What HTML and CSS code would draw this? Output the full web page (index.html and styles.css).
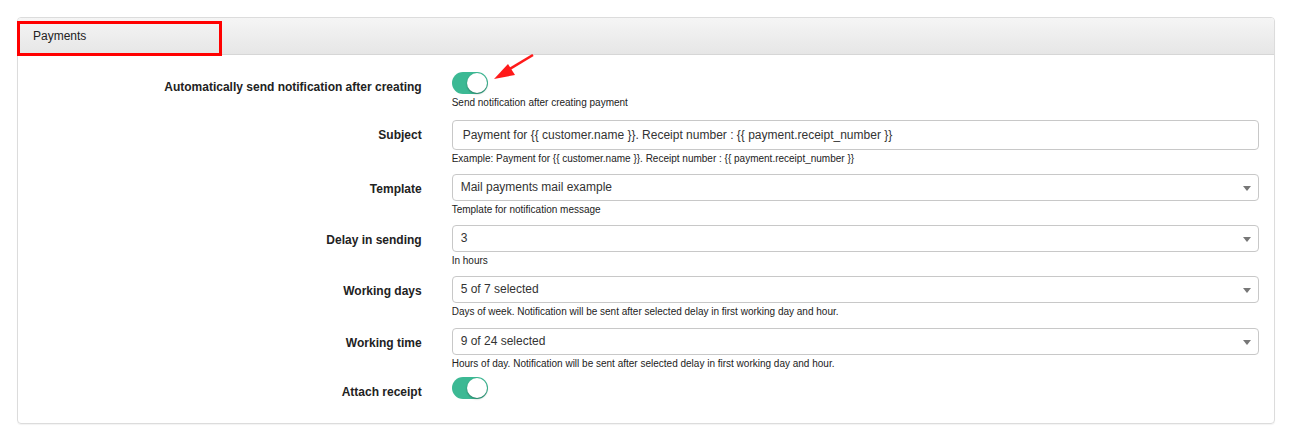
FILE: index.html
```html
<!DOCTYPE html>
<html>
<head>
<meta charset="utf-8">
<link rel="stylesheet" href="styles.css">
</head>
<body>
<div class="page">
  <div class="panel">
    <div class="panel-heading">Payments</div>
    <div class="panel-body">
      <div class="form-row row-toggle">
        <label class="label">Automatically send notification after creating</label>
        <div class="control">
          <span class="toggle"><span class="knob"></span></span>
          <div class="help">Send notification after creating payment</div>
        </div>
      </div>
      <div class="form-row row-subject">
        <label class="label">Subject</label>
        <div class="control">
          <div class="input">Payment for {{ customer.name }}. Receipt number : {{ payment.receipt_number }}</div>
          <div class="help">Example: Payment for {{ customer.name }}. Receipt number : {{ payment.receipt_number }}</div>
        </div>
      </div>
      <div class="form-row">
        <label class="label">Template</label>
        <div class="control">
          <div class="select">Mail payments mail example<span class="caret"></span></div>
          <div class="help">Template for notification message</div>
        </div>
      </div>
      <div class="form-row">
        <label class="label">Delay in sending</label>
        <div class="control">
          <div class="select">3<span class="caret"></span></div>
          <div class="help">In hours</div>
        </div>
      </div>
      <div class="form-row row-days">
        <label class="label">Working days</label>
        <div class="control">
          <div class="select">5 of 7 selected<span class="caret"></span></div>
          <div class="help">Days of week. Notification will be sent after selected delay in first working day and hour.</div>
        </div>
      </div>
      <div class="form-row row-before-last">
        <label class="label">Working time</label>
        <div class="control">
          <div class="select">9 of 24 selected<span class="caret"></span></div>
          <div class="help">Hours of day. Notification will be sent after selected delay in first working day and hour.</div>
        </div>
      </div>
      <div class="form-row last">
        <label class="label">Attach receipt</label>
        <div class="control">
          <span class="toggle"><span class="knob"></span></span>
        </div>
      </div>
    </div>
    <div class="annot-box"></div>
    <svg class="annot-arrow" width="60" height="40" viewBox="0 0 60 40">
      <line x1="56" y1="1" x2="26" y2="19" stroke="#ff1a1a" stroke-width="2.5"/>
      <polygon points="17,25 31,10 38,21" fill="#ff1a1a"/>
    </svg>
  </div>
</div>
</body>
</html>
```

FILE: styles.css
```css
html, body {
  margin: 0;
  padding: 0;
  background: #fff;
}
body {
  font-family: "Liberation Sans", Arial, Helvetica, sans-serif;
  color: #333;
}
.page {
  padding: 17px 24px 16px 17px;
}
.panel {
  position: relative;
  border: 1px solid #dcdcdc;
  border-radius: 4px;
  box-shadow: 0 1px 1px rgba(0,0,0,0.05);
}
.panel-heading {
  height: 37px;
  box-sizing: border-box;
  padding: 0 15px;
  line-height: 36px;
  font-size: 12px;
  color: #222;
  background: linear-gradient(#f5f5f5, #e6e6e6);
  border-bottom: 1px solid #d6d6d6;
  border-radius: 3px 3px 0 0;
}
.panel-body {
  padding: 17px 15px 15px 15px;
}
.form-row {
  display: grid;
  grid-template-columns: calc((100% + 30px) / 3 - 30px) 1fr;
  column-gap: 30px;
  margin-bottom: 9px;
}
.form-row.row-toggle {
  margin-bottom: 11px;
}
.form-row.row-days {
  margin-bottom: 10px;
}
.form-row.row-before-last {
  margin-bottom: 7px;
}
.form-row.last {
  margin-bottom: 9px;
}
.label {
  text-align: right;
  font-weight: bold;
  font-size: 12px;
  color: #222;
  padding-top: 8px;
  line-height: 14px;
}
.control {
  min-width: 0;
}
.toggle {
  display: block;
  position: relative;
  width: 36px;
  height: 22px;
  border-radius: 11px;
  background: #3cb994;
  margin-bottom: 2px;
}
.last .toggle {
  margin-bottom: 0;
}
.knob {
  position: absolute;
  right: 1px;
  top: 1px;
  width: 20px;
  height: 20px;
  border-radius: 50%;
  background: #fff;
  box-shadow: 0 1px 2px rgba(0,0,0,0.35);
}
.input, .select {
  position: relative;
  box-sizing: border-box;
  border: 1px solid #c8c8c8;
  border-radius: 4px;
  background: #fff;
  font-size: 12px;
  color: #333;
  white-space: nowrap;
}
.input {
  height: 30px;
  line-height: 28px;
  padding: 0 10px;
}
.select {
  height: 27px;
  line-height: 25px;
  padding: 0 8px;
}
.caret {
  position: absolute;
  right: 7px;
  top: 11px;
  width: 0;
  height: 0;
  border-left: 4px solid transparent;
  border-right: 4px solid transparent;
  border-top: 5px solid #777;
}
.help {
  font-size: 10px;
  line-height: 13px;
  color: #222;
  margin-top: 2px;
}
.annot-box {
  position: absolute;
  left: -1px;
  top: 3px;
  width: 205px;
  height: 35px;
  box-sizing: border-box;
  border: 3px solid #ff0000;
}
.annot-arrow {
  position: absolute;
  left: 459px;
  top: 36px;
}
```
